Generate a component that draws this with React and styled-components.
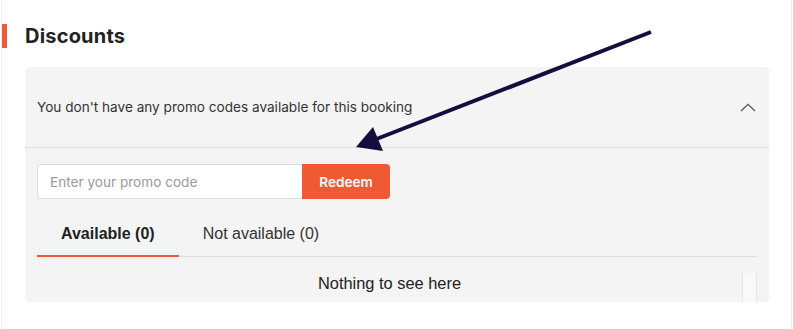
import React, { useState } from "react";
import styled, { createGlobalStyle } from "styled-components";

const Global = createGlobalStyle`
  html, body { margin: 0; padding: 0; background: #fff; }
  body { font-family: Inter, "Liberation Sans", Arial, sans-serif; }
  * { box-sizing: border-box; }
`;

const Page = styled.div`
  position: relative;
  width: 793px;
  height: 329px;
  overflow: hidden;
`;

const Frame = styled.div`
  margin: 0 1px;
  height: 329px;
  border-left: 1px solid #f0f0f0;
  border-right: 1px solid #ececec;
  padding-top: 24px;
`;

const TitleRow = styled.div`
  display: flex;
  align-items: center;
  height: 24px;
`;

const Accent = styled.div`
  width: 5px;
  height: 24px;
  background: #ef5a35;
`;

const Title = styled.h2`
  margin: 0 0 0 18px;
  font-family: Inter, "Open Sans", sans-serif;
  font-weight: 700;
  font-size: 20px;
  letter-spacing: 0.2px;
  color: #222;
`;

const Card = styled.div`
  margin: 19px 22px 0 23px;
  height: 235px;
  background: #f4f4f4;
  border-radius: 4px;
  overflow: hidden;
`;

const CardHeader = styled.div`
  display: flex;
  align-items: center;
  justify-content: space-between;
  height: 81px;
  padding: 0 13px 0 12px;
  border-bottom: 1px solid #dedede;
  font-size: 13.6px;
  color: #333;
`;

const Body = styled.div`
  padding: 16px 12px 0 12px;
`;

const PromoForm = styled.div`
  display: flex;
  height: 35px;
`;

const PromoInput = styled.input`
  width: 265px;
  height: 35px;
  border: 1px solid #dcdcdc;
  border-right: none;
  border-radius: 4px 0 0 4px;
  padding: 0 12px;
  font-family: Inter, sans-serif;
  font-size: 13.6px;
  color: #333;
  background: #fff;
  outline: none;
  &::placeholder { color: #9a9a9a; }
`;

const RedeemButton = styled.button`
  width: 88px;
  height: 35px;
  border: none;
  border-radius: 0 4px 4px 0;
  background: #ef5a35;
  color: #fff;
  font-family: Inter, sans-serif;
  font-weight: 600;
  font-size: 13.6px;
  cursor: pointer;
`;

const Tabs = styled.div`
  display: flex;
  margin-top: 12px;
  border-bottom: 1px solid #dddddd;
`;

const Tab = styled.div`
  height: 46px;
  padding: 1px 24px 0;
  display: flex;
  align-items: center;
  margin-bottom: -1px;
  font-family: "Liberation Sans", Arial, sans-serif;
  font-size: 16px;
  font-weight: ${(p) => (p.$active ? 700 : 400)};
  color: ${(p) => (p.$active ? "#222" : "#333")};
  border-bottom: 2px solid ${(p) => (p.$active ? "#ef5a35" : "transparent")};
  cursor: pointer;
`;

const ListArea = styled.div`
  display: flex;
  margin-top: 16px;
  height: 29px;
`;

const Empty = styled.div`
  flex: 1;
  text-align: center;
  padding-top: 1px;
  font-family: "Liberation Sans", Arial, sans-serif;
  font-size: 16.4px;
  line-height: 19px;
  color: #222;
`;

const ScrollTrack = styled.div`
  width: 15px;
  background: #f9f9f9;
  border-left: 1px solid #e6e6e6;
  border-right: 1px solid #e6e6e6;
`;

const Overlay = styled.svg`
  position: absolute;
  left: 0;
  top: 0;
  pointer-events: none;
`;

const Chevron = () => (
  <svg width="16" height="9" viewBox="0 0 16 9">
    <path d="M1 8 L8 1.3 L15 8" fill="none" stroke="#555" strokeWidth="1.3" />
  </svg>
);

export default function App() {
  const [tab, setTab] = useState(0);
  return (
    <Page>
      <Global />
      <Frame>
        <TitleRow>
          <Accent />
          <Title>Discounts</Title>
        </TitleRow>
        <Card>
          <CardHeader>
            <span>You don't have any promo codes available for this booking</span>
            <Chevron />
          </CardHeader>
          <Body>
            <PromoForm>
              <PromoInput placeholder="Enter your promo code" />
              <RedeemButton>Redeem</RedeemButton>
            </PromoForm>
            <Tabs>
              <Tab $active={tab === 0} onClick={() => setTab(0)}>Available (0)</Tab>
              <Tab $active={tab === 1} onClick={() => setTab(1)}>Not available (0)</Tab>
            </Tabs>
            <ListArea>
              <Empty>Nothing to see here</Empty>
              <ScrollTrack />
            </ListArea>
          </Body>
        </Card>
      </Frame>
      <Overlay width="793" height="329" viewBox="0 0 793 329">
        <line x1="651" y1="32" x2="374" y2="140" stroke="#150d3d" strokeWidth="4" />
        <polygon points="356,147 373,127 383,151" fill="#150d3d" />
      </Overlay>
    </Page>
  );
}
